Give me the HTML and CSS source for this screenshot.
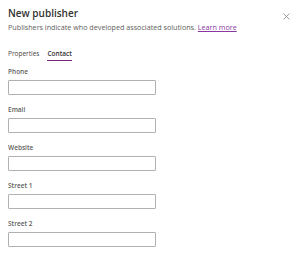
FILE: index.html
```html
<!DOCTYPE html>
<html lang="en">
<head>
  <meta charset="UTF-8" />
  <title>New publisher</title>
  <link rel="stylesheet" href="styles.css">
</head>
<body>
  <div class="panel">
    <div class="header">
      <div>
        <h2 class="title">New publisher</h2>
        <p class="subtitle">Publishers indicate who developed associated solutions. <a href="#">Learn more</a></p>
      </div>
      <button class="close" aria-label="Close">
        <svg width="7" height="7" viewBox="0 0 7 7"><path d="M0.5 0.5 L6.5 6.5 M6.5 0.5 L0.5 6.5" stroke="#8a8886" stroke-width="0.8" fill="none"/></svg>
      </button>
    </div>

    <div class="tabs">
      <span class="tab">Properties</span>
      <span class="tab active">Contact</span>
    </div>

    <div class="field">
      <label>Phone</label>
      <input type="text" />
    </div>
    <div class="field">
      <label>Email</label>
      <input type="text" />
    </div>
    <div class="field">
      <label>Website</label>
      <input type="text" />
    </div>
    <div class="field">
      <label>Street 1</label>
      <input type="text" />
    </div>
    <div class="field">
      <label>Street 2</label>
      <input type="text" />
    </div>
  </div>
</body>
</html>
```

FILE: styles.css
```css
* {
  box-sizing: border-box;
}

body {
  margin: 0;
  background-color: #fff;
  font-family: 'Open Sans', sans-serif;
  color: #323130;
}

.panel {
  padding: 6px 8px;
}

.header {
  display: flex;
  justify-content: space-between;
  align-items: flex-start;
}

.title {
  margin: 0;
  font-size: 10px;
  font-weight: 600;
  line-height: 14px;
}

.subtitle {
  margin: 2px 0 0;
  font-size: 7.2px;
  color: #605e5c;
  line-height: 11px;
}

.subtitle a {
  color: #8a3a9e;
}

.close {
  border: none;
  background: none;
  padding: 0;
  margin: 7px 2px 0 0;
  line-height: 0;
  cursor: pointer;
}

.tabs {
  display: flex;
  gap: 8px;
  margin-top: 16px;
  font-size: 6.5px;
  line-height: 9px;
}

.tab {
  padding-bottom: 2px;
  color: #484644;
}

.tab.active {
  font-weight: 600;
  color: #323130;
  border-bottom: 1px solid #742774;
}

.field {
  display: flex;
  flex-direction: column;
  margin-top: 6px;
}

.field + .field {
  margin-top: 10px;
}

.field label {
  font-size: 6.5px;
  font-weight: 600;
  color: #605e5c;
  line-height: 10px;
  margin-bottom: 3px;
}

.field input {
  width: 148px;
  height: 15px;
  border: 1px solid #b3b0ad;
  border-radius: 1px;
  padding: 0 4px;
}
```
